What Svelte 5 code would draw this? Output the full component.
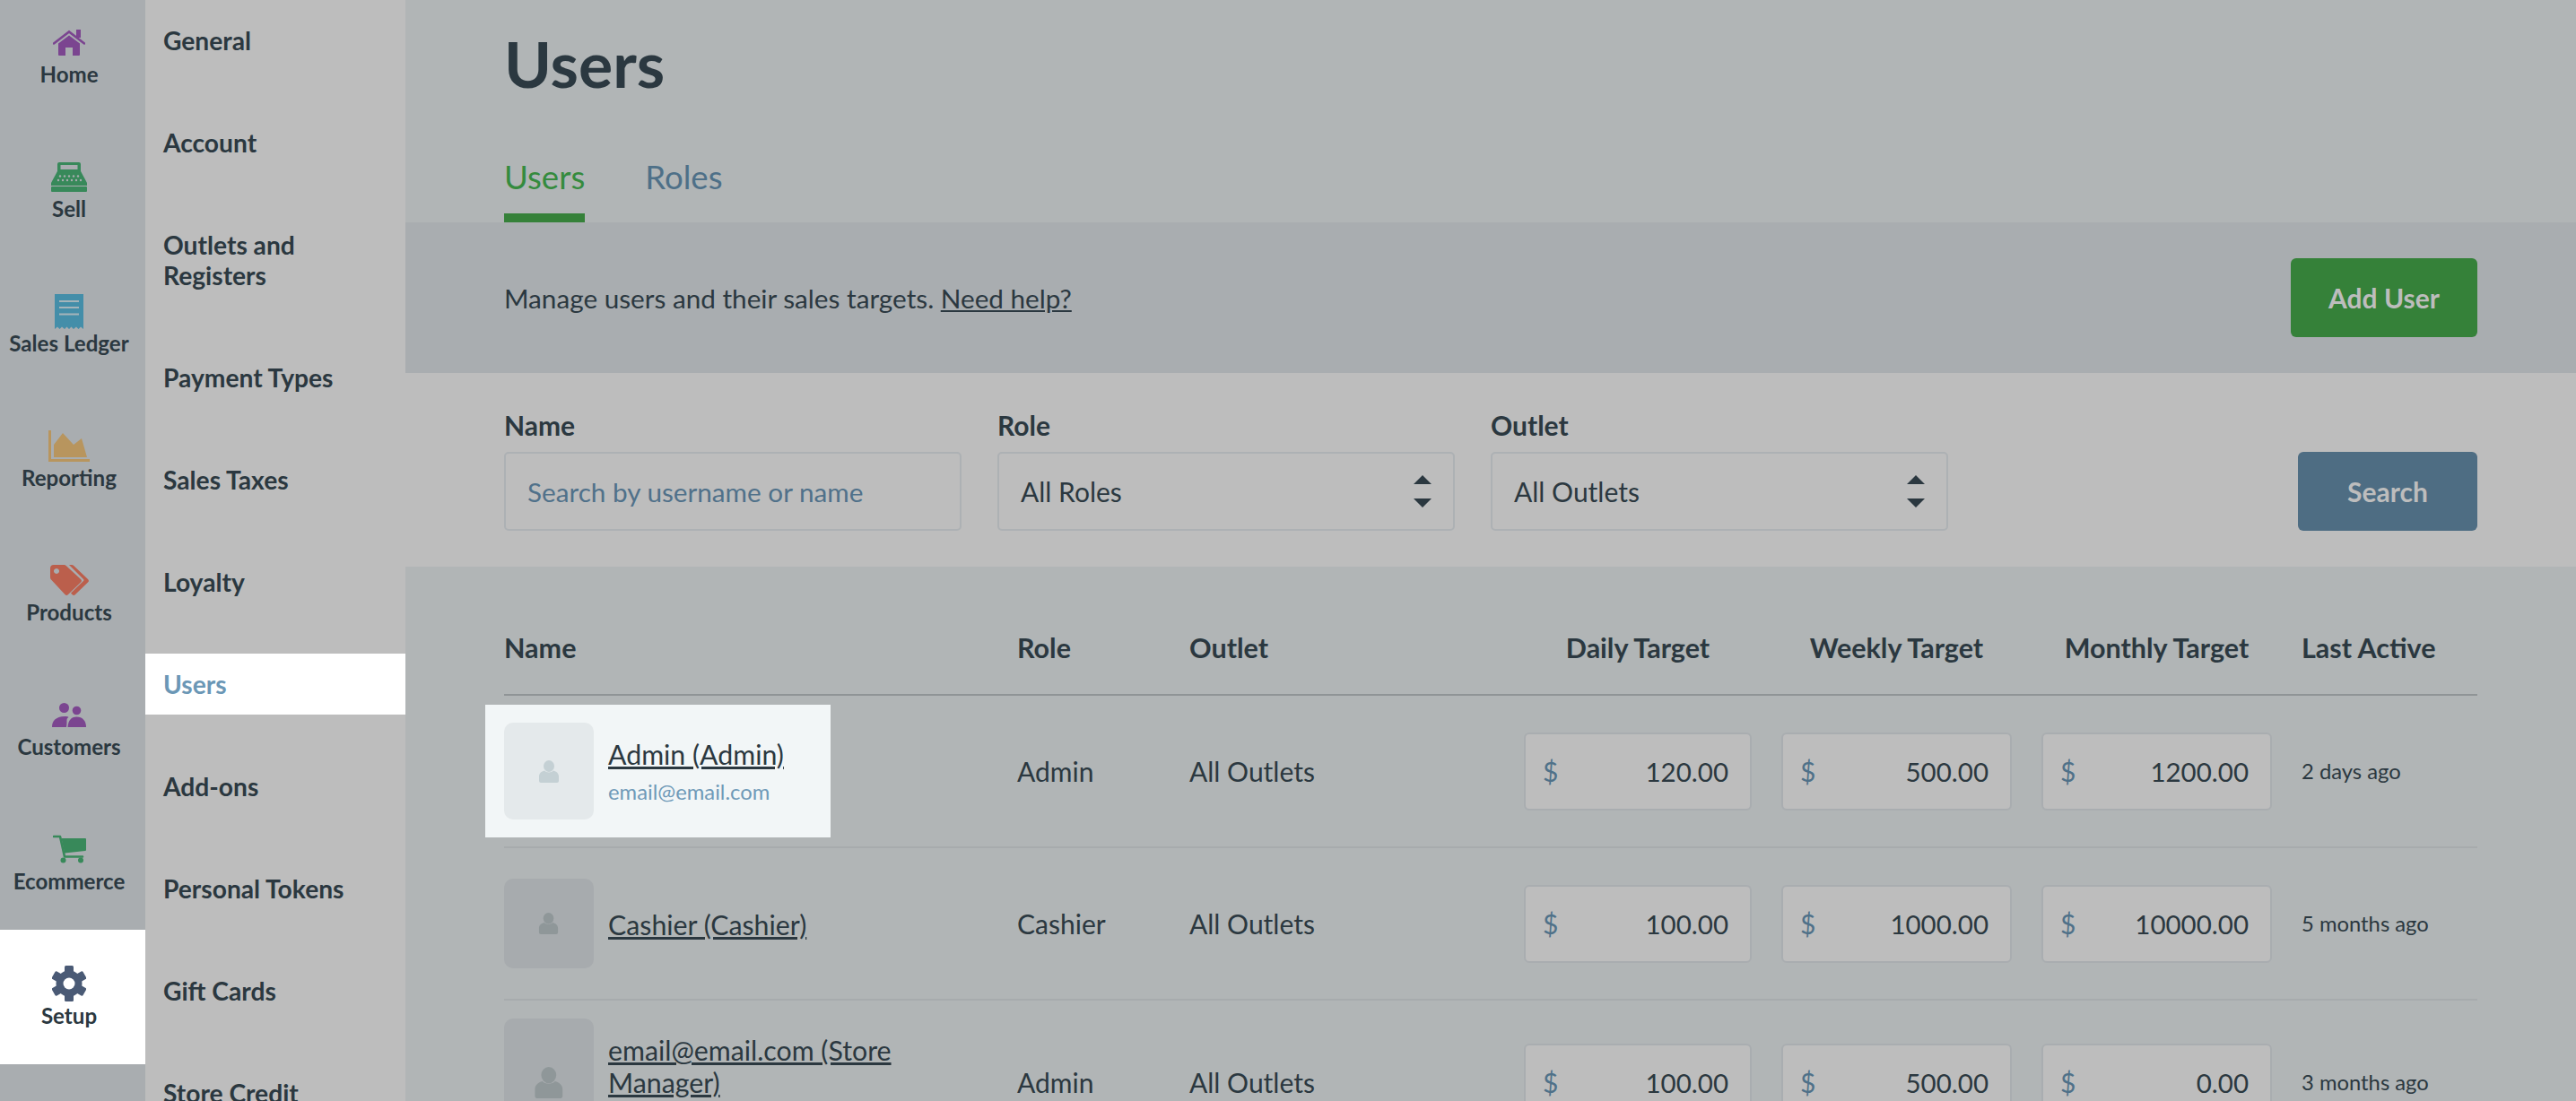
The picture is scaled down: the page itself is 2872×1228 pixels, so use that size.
<script>
  const railItems = [
    { label: "Home", icon: "home" },
    { label: "Sell", icon: "sell" },
    { label: "Sales Ledger", icon: "ledger" },
    { label: "Reporting", icon: "reporting" },
    { label: "Products", icon: "products" },
    { label: "Customers", icon: "customers" },
    { label: "Ecommerce", icon: "ecommerce" },
    { label: "Setup", icon: "setup", active: true }
  ];

  const setupItems = [
    "General", "Account", "Outlets and Registers", "Payment Types", "Sales Taxes",
    "Loyalty", "Users", "Add-ons", "Personal Tokens", "Gift Cards", "Store Credit"
  ];

  const users = [
    { name: "Admin (Admin)", email: "email@email.com", role: "Admin", outlet: "All Outlets", daily: "120.00", weekly: "500.00", monthly: "1200.00", active: "2 days ago", avatar: 108, person: 25, highlight: true },
    { name: "Cashier (Cashier)", role: "Cashier", outlet: "All Outlets", daily: "100.00", weekly: "1000.00", monthly: "10000.00", active: "5 months ago", avatar: 100, person: 24 },
    { name: "email@email.com (Store Manager)", role: "Admin", outlet: "All Outlets", daily: "100.00", weekly: "500.00", monthly: "0.00", active: "3 months ago", avatar: 142, person: 35, raised: true }
  ];

  const gearTeeth = [0, 60, 120, 180, 240, 300];
  const registerDots = [
    [10, 15.5], [15, 15.5], [20, 15.5], [25, 15.5], [30, 15.5],
    [8, 20], [13, 20], [18, 20], [23, 20], [28, 20], [33, 20]
  ];
</script>

<div class="shell">
  <nav class="rail">
    {#each railItems as item}
      <a class="rail-item" class:active={item.active} href="#{item.icon}">
        <span class="rail-icon">
          {#if item.icon === "home"}
            <svg width="36" height="29" viewBox="0 0 36 29" fill="#7b4590">
              <rect x="26" y="0" width="5" height="9" />
              <path d="M1 15.5 18 2.5 35 15.5" fill="none" stroke="#7b4590" stroke-width="2.6" stroke-linecap="round" />
              <path d="M6 15.5 18 6.5 30 15.5V28a1 1 0 0 1-1 1H22V20H14V29H7a1 1 0 0 1-1-1Z" />
            </svg>
          {:else if item.icon === "sell"}
            <svg width="40" height="33" viewBox="0 0 40 33" fill="#38895a">
              <path d="M7 11V2a2 2 0 0 1 2-2H31a2 2 0 0 1 2 2V11H7ZM10.500 3V8H29.500V3Z" fill-rule="evenodd" />
              <path d="M7 10H33L40 23V26H0V23Z" />
              {#each registerDots as dot}
                <circle cx={dot[0]} cy={dot[1]} r="1.200" fill="#a9adb0" />
              {/each}
              <rect x="0" y="27" width="40" height="6" rx="1" />
            </svg>
          {:else if item.icon === "ledger"}
            <svg width="32" height="39" viewBox="0 0 32 39">
              <path d="M0 0H32V39L29 36.500 26.500 39 24 36.500 21 39 18.500 36.500 16 39 13.500 36.500 11 39 8 36.500 5.500 39 3 36.500 0 39Z" fill="#448ea9" />
              <path d="M5 8H27M5 15H27M5 22.500H27" stroke="#a5b4ba" stroke-width="2" />
            </svg>
          {:else if item.icon === "reporting"}
            <svg width="46" height="35" viewBox="0 0 46 35" fill="#b8955e">
              <path d="M0 0H3V32H46V35H0Z" />
              <path d="M6 16 16 3 28 16 37 9 43 30H6Z" />
            </svg>
          {:else if item.icon === "products"}
            <svg width="43" height="34" viewBox="0 0 43 34" fill="#bb5f4c">
              <path d="M0 4a4 4 0 0 1 4-4H15a4 4 0 0 1 3 1.200L34 16a2.500 2.500 0 0 1 0 3.600L20 33a2.500 2.500 0 0 1-3.600 0L1.500 17A4 4 0 0 1 0 14ZM7 4a3 3 0 1 0 .01 0Z" fill-rule="evenodd" />
              <path d="M21 0H23.500a4 4 0 0 1 3 1.200L42 16a2.500 2.500 0 0 1 0 3.600L28 33a2.500 2.500 0 0 1-3.600 0L23 31.500 37 18 Q38 17 37 16Z" />
            </svg>
          {:else if item.icon === "customers"}
            <svg width="38" height="27" viewBox="0 0 38 27" fill="#7b4590">
              <circle cx="13.500" cy="5.500" r="5.500" />
              <circle cx="27.500" cy="8.500" r="4.800" />
              <path d="M0 27C0 20 4 15.500 14 15 17.500 15 18 15.500 18.500 16 15 18 17.500 20 16 27Z" />
              <path d="M17.500 27C18 20 21 15.500 27.500 15.500 34 15.500 38 20 38 27Z" />
            </svg>
          {:else if item.icon === "ecommerce"}
            <svg width="37" height="32" viewBox="0 0 37 32" fill="#38895a">
              <path d="M1 2H8L13 24.500H33" fill="none" stroke="#38895a" stroke-width="2.600" stroke-linecap="round" stroke-linejoin="round" />
              <path d="M9.500 4H36a1 1 0 0 1 1 1V17a1 1 0 0 1-1 1L13 20.500Z" />
              <circle cx="11.500" cy="28.500" r="3" />
              <circle cx="31" cy="28.500" r="3" />
            </svg>
          {:else}
            <svg width="38" height="40" viewBox="0 0 38 40" fill="#4a5a75">
              {#each gearTeeth as angle}
                <rect x="14" y="0" width="10" height="10" rx="1.500" transform="rotate({angle} 19 20)" />
              {/each}
              <circle cx="19" cy="20" r="14.500" />
              <circle cx="19" cy="20" r="6.500" fill="#fff" />
            </svg>
          {/if}
        </span>
        <span class="rail-label">{item.label}</span>
      </a>
    {/each}
  </nav>

  <nav class="setup-nav">
    {#each setupItems as item}
      <a class="setup-item" class:current={item === "Users"} href="#setup">{item}</a>
    {/each}
  </nav>

  <main>
    <header class="page-head">
      <h1>Users</h1>
      <div class="tabs">
        <a class="tab selected" href="#users">Users</a>
        <a class="tab" href="#roles">Roles</a>
      </div>
    </header>

    <section class="intro">
      <p>Manage users and their sales targets. <a href="#help">Need help?</a></p>
      <button class="add-btn">Add User</button>
    </section>

    <section class="filters">
      <div class="field">
        <label for="name-search">Name</label>
        <input id="name-search" type="text" placeholder="Search by username or name" />
      </div>
      <div class="field">
        <span class="field-label">Role</span>
        <div class="select">
          <span>All Roles</span>
          <svg width="20" height="36" viewBox="0 0 20 36" fill="#2b3840"><path d="M10 0 20 10H0ZM0 26H20L10 36Z" /></svg>
        </div>
      </div>
      <div class="field">
        <span class="field-label">Outlet</span>
        <div class="select">
          <span>All Outlets</span>
          <svg width="20" height="36" viewBox="0 0 20 36" fill="#2b3840"><path d="M10 0 20 10H0ZM0 26H20L10 36Z" /></svg>
        </div>
      </div>
      <button class="search-btn">Search</button>
    </section>

    <section class="table">
      <div class="row head">
        <div>Name</div>
        <div>Role</div>
        <div>Outlet</div>
        <div class="centered">Daily Target</div>
        <div class="centered">Weekly Target</div>
        <div class="centered">Monthly Target</div>
        <div>Last Active</div>
      </div>
      {#each users as user}
        <div class="row">
          <div class="user" class:highlight={user.highlight}>
            <div class="avatar" style="height: {user.avatar}px">
              <svg height={user.person} viewBox="0 0 24 25" class="person">
                <ellipse cx="12" cy="6.500" rx="6" ry="6.500" />
                <path d="M1 23V18C1 14.500 3.500 12.500 7 11.500 9 14 15 14 17 11.500 20.500 12.500 23 14.500 23 18V23Q23 25 21 25H3Q1 25 1 23Z" />
              </svg>
            </div>
            <div class="who" class:raised={user.raised}>
              <a href="#user">{user.name}</a>
              {#if user.email}
                <span class="email">{user.email}</span>
              {/if}
            </div>
          </div>
          <div>{user.role}</div>
          <div>{user.outlet}</div>
          {#each [user.daily, user.weekly, user.monthly] as target}
            <div class="money">
              <span>$</span>
              <input type="text" value={target} />
            </div>
          {/each}
          <div class="last-active">{user.active}</div>
        </div>
      {/each}
    </section>
  </main>
</div>

<style>
  :global(body) {
    margin: 0;
    background: #b1b5b6;
  }

  .shell {
    display: flex;
    height: 1228px;
    overflow: hidden;
    font-family: Lato, "Open Sans", sans-serif;
    font-size: 30px;
    color: #2b3840;
  }

  a {
    color: inherit;
  }

  .rail {
    flex: 0 0 162px;
    background: #a9adb0;
  }

  .rail-item {
    display: flex;
    flex-direction: column;
    align-items: center;
    box-sizing: border-box;
    height: 150px;
    padding: 27px 8px 0 0;
    text-decoration: none;
  }

  .rail-item:first-child {
    margin-top: -13px;
  }

  .rail-item.active {
    background: #fff;
  }

  .rail-icon {
    display: flex;
    align-items: center;
    justify-content: center;
    height: 40px;
    margin-top: 13px;
  }

  .rail-label {
    margin-top: 1px;
    font-size: 24.100px;
    font-weight: 700;
    line-height: 30px;
    white-space: nowrap;
  }

  .setup-nav {
    flex: 0 0 290px;
    display: flex;
    flex-direction: column;
    gap: 46px;
    padding-top: 11px;
    background: #bdbdbd;
  }

  .setup-item {
    padding: 17px 20px;
    font-size: 28.200px;
    font-weight: 700;
    line-height: 34px;
    text-decoration: none;
  }

  .setup-item.current {
    background: #fff;
    color: #6b97b6;
  }

  main {
    flex: 1;
    min-width: 0;
  }

  .page-head {
    height: 248px;
    box-sizing: border-box;
    padding: 26px 110px 0;
  }

  h1 {
    margin: 0;
    font-size: 71.500px;
    font-weight: 700;
    line-height: 88px;
  }

  .tabs {
    display: flex;
    gap: 67px;
    margin-top: 35px;
  }

  .tab {
    height: 99px;
    box-sizing: border-box;
    padding-top: 24px;
    font-size: 36.600px;
    line-height: 48px;
    color: #4e7088;
    text-decoration: none;
  }

  .tab.selected {
    border-bottom: 10px solid #358139;
    color: #358b3e;
  }

  .intro {
    display: flex;
    align-items: center;
    justify-content: space-between;
    height: 168px;
    padding: 0 110px;
    background: #a9adb0;
  }

  .intro p {
    margin: 0;
    font-size: 29.700px;
  }

  button {
    height: 88px;
    border: none;
    border-radius: 6px;
    font-family: inherit;
    font-size: 30px;
    font-weight: 700;
    color: #bdbdbd;
  }

  .add-btn {
    width: 208px;
    background: #358139;
  }

  .search-btn {
    width: 200px;
    margin-left: auto;
    background: #4e6d83;
  }

  .filters {
    display: flex;
    align-items: flex-end;
    gap: 40.500px;
    height: 216px;
    box-sizing: border-box;
    padding: 0 110px 40px;
    background: #bdbdbd;
  }

  .field {
    display: flex;
    flex-direction: column;
    gap: 13px;
    width: 509.500px;
  }

  .field label,
  .field-label {
    font-weight: 700;
    line-height: 34px;
  }

  .field input,
  .select {
    box-sizing: border-box;
    width: 100%;
    height: 88px;
    padding: 0 24px;
    border: 2px solid #adb1b4;
    border-radius: 5px;
    background: transparent;
    font-family: inherit;
    font-size: 30px;
    color: inherit;
  }

  .field input {
    font-size: 29.700px;
  }

  .field input::placeholder {
    color: #50718a;
    opacity: 1;
  }

  .select {
    display: flex;
    align-items: center;
    justify-content: space-between;
  }

  .table {
    padding: 0 110px;
  }

  .row {
    display: grid;
    grid-template-columns: 539px 159px 340px 254px 257px 257px 196px;
    column-gap: 33px;
    align-items: center;
    box-sizing: border-box;
    min-height: 170px;
    padding: 20px 0;
    border-bottom: 2px solid #a7abad;
  }

  .row.head {
    height: 144px;
    min-height: 0;
    padding: 0 0 16px;
    align-items: end;
    border-bottom-color: #8f9496;
    font-size: 30.500px;
    font-weight: 700;
    line-height: 72px;
  }

  .centered {
    text-align: center;
    white-space: nowrap;
  }

  .user {
    display: flex;
    align-items: center;
    gap: 16px;
  }

  .user.highlight {
    width: 385px;
    box-sizing: border-box;
    margin: -10px 0 -10px -21px;
    padding: 20px 21px;
    background: #f2f6f7;
  }

  .avatar {
    flex: 0 0 100px;
    display: flex;
    align-items: center;
    justify-content: center;
    border-radius: 10px;
    background: #a7abae;
  }

  .person {
    fill: #8f9799;
  }

  .highlight .avatar {
    background: #e4e9eb;
  }

  .highlight .person {
    fill: #c4d0d4;
  }

  .who {
    display: flex;
    flex-direction: column;
    gap: 8px;
    padding-top: 2px;
    font-size: 30.300px;
    line-height: 36px;
  }

  .who.raised {
    padding: 0 0 36px;
  }

  .email {
    font-size: 23.800px;
    line-height: 32px;
    color: #6f9ab8;
  }

  .money {
    display: flex;
    align-items: center;
    height: 87px;
    box-sizing: border-box;
    padding: 0 24px 0 19px;
    border: 2px solid #a9adb0;
    border-radius: 6px;
    background: #bdbdbd;
  }

  .money span {
    color: #4f7189;
  }

  .money input {
    flex: 1;
    width: 100%;
    min-width: 0;
    padding: 0;
    border: none;
    outline: none;
    background: transparent;
    font-family: inherit;
    font-size: 29.500px;
    color: inherit;
    text-align: right;
  }

  .last-active {
    font-size: 23.800px;
  }
</style>
